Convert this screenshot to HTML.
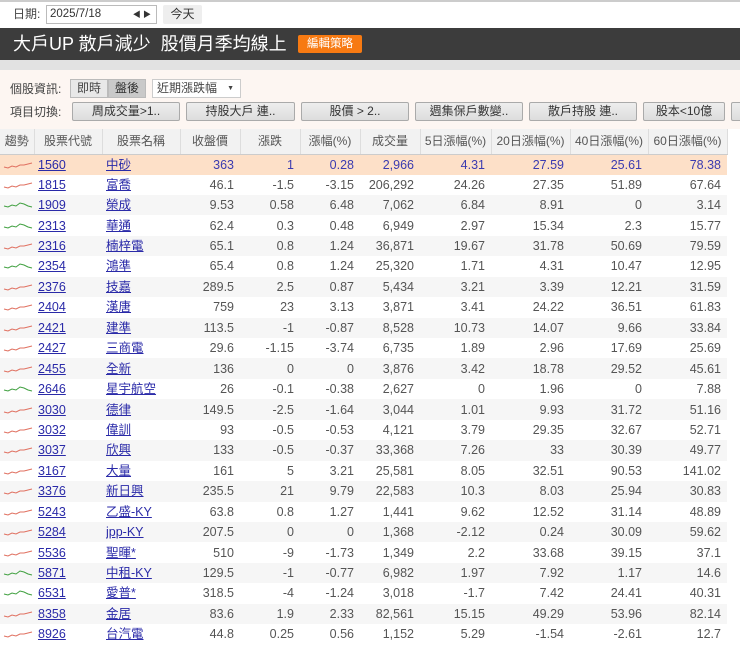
<!DOCTYPE html>
<html><head><meta charset="utf-8"><style>
*{margin:0;padding:0;box-sizing:border-box}
body{width:740px;height:646px;overflow:hidden;background:#fff;font-family:"Liberation Sans","Noto Sans CJK TC",sans-serif;font-size:12px;color:#555;position:relative;line-height:1.2}
.abs{position:absolute}
.btn{position:absolute;top:102px;height:19px;background:linear-gradient(#eee,#ddd);border:1px solid #aaa;border-radius:2px;font-size:12px;color:#333;text-align:center;line-height:17px;overflow:hidden}
table{position:absolute;left:0;top:129px;border-collapse:collapse;table-layout:fixed;width:727px}
th{height:25px;line-height:16px;background:#f2f2f2;font-weight:normal;color:#555;border-right:1px solid #ddd;border-bottom:1px solid #ccc;font-size:12px;overflow:hidden;white-space:nowrap}
tr{height:20.45px}
td{height:20.45px;line-height:20px;padding:0 6px 0 0;text-align:right;font-size:12.5px;white-space:nowrap;vertical-align:middle;overflow:hidden}
td.l{text-align:left;padding-left:4px}
td.l a{display:block;height:20px;line-height:20px;overflow:hidden}
td.s{padding:0 0 0 3px;text-align:left}
tr:nth-child(even) td{background:#f6f6f6}
tr.hl td{background:#fde0c8;color:#3b3bb0}
a{color:#2a2aa8;text-decoration:underline}
svg{display:block}
</style></head><body>
<div class="abs" style="left:0;top:0;width:740px;height:27px;background:#fff;border-top:2px solid #ccc"></div>
<div class="abs" style="left:13px;top:6px;color:#444;line-height:16px">日期:</div>
<div class="abs" style="left:46px;top:5px;width:111px;height:19px;border:1px solid #bbb;font-size:11.5px;line-height:17px;padding-left:3px;color:#333">2025/7/18<span style="position:absolute;right:5px;font-size:8px">◀ ▶</span></div>
<div class="abs" style="left:163px;top:5px;width:39px;height:19px;background:#eee;border-radius:2px;text-align:center;line-height:19px;color:#333">今天</div>
<div class="abs" style="left:0;top:28px;width:740px;height:32px;background:#3c3c3c"></div>
<div class="abs" style="left:13px;top:31px;color:#fff;font-size:18px;line-height:26px;white-space:nowrap">大戶UP 散戶減少&nbsp; 股價月季均線上</div>
<div class="abs" style="left:298px;top:35px;width:64px;height:18px;background:#f77a12;color:#fff;font-size:11.5px;text-align:center;line-height:18px;border-radius:2px">編輯策略</div>
<div class="abs" style="left:0;top:60px;width:740px;height:10px;background:#e2e2e2"></div>
<div class="abs" style="left:0;top:70px;width:740px;height:59px;background:#fdf6f2"></div>
<div class="abs" style="left:10px;top:80px;color:#444;line-height:18px">個股資訊:</div>
<div class="abs" style="left:70px;top:79px;width:38px;height:19px;background:#e8e8e8;border:1px solid #bbb;text-align:center;line-height:17px;color:#444">即時</div>
<div class="abs" style="left:108px;top:79px;width:38px;height:19px;background:#c9c9c9;border:1px solid #bbb;text-align:center;line-height:17px;color:#333">盤後</div>
<div class="abs" style="left:152px;top:79px;width:89px;height:19px;background:#fff;border:1px solid #ccc;line-height:17px;padding-left:4px;color:#444">近期漲跌幅<span style="position:absolute;right:6px;font-size:7px">▼</span></div>
<div class="abs" style="left:10px;top:103px;color:#444;line-height:18px">項目切換:</div>
<div class="btn" style="left:72px;width:108px">周成交量&gt;1..</div>
<div class="btn" style="left:186px;width:109px">持股大戶 連..</div>
<div class="btn" style="left:301px;width:108px">股價 &gt; 2..</div>
<div class="btn" style="left:415px;width:108px">週集保戶數變..</div>
<div class="btn" style="left:529px;width:108px">散戶持股 連..</div>
<div class="btn" style="left:643px;width:82px">股本&lt;10億</div>
<div class="btn" style="left:731px;width:20px"></div>
<svg width="0" height="0" style="position:absolute"><defs>
<symbol id="r" viewBox="0 0 30 10"><polyline points="1,7 5,8 9,6 13,7 17,5 21,5 25,4 29,3" fill="none" stroke="#e07060" stroke-width="1"/></symbol>
<symbol id="g" viewBox="0 0 30 10"><polyline points="1,6 5,7 9,5 13,6 17,3 21,4 25,6 29,7" fill="none" stroke="#40a040" stroke-width="1"/></symbol>
</defs></svg>
<table>
<colgroup><col style="width:34px"><col style="width:68px"><col style="width:78px"><col style="width:60px"><col style="width:60px"><col style="width:60px"><col style="width:60px"><col style="width:71px"><col style="width:79px"><col style="width:78px"><col style="width:79px"></colgroup>
<tr><th>趨勢</th><th>股票代號</th><th>股票名稱</th><th>收盤價</th><th>漲跌</th><th>漲幅(%)</th><th>成交量</th><th>5日漲幅(%)</th><th>20日漲幅(%)</th><th>40日漲幅(%)</th><th>60日漲幅(%)</th></tr>
<tr class="hl"><td class="s"><svg width="30" height="10"><use href="#r"/></svg></td><td class="l"><a>1560</a></td><td class="l"><a>中砂</a></td><td>363</td><td>1</td><td>0.28</td><td>2,966</td><td>4.31</td><td>27.59</td><td>25.61</td><td>78.38</td></tr>
<tr><td class="s"><svg width="30" height="10"><use href="#r"/></svg></td><td class="l"><a>1815</a></td><td class="l"><a>富喬</a></td><td>46.1</td><td>-1.5</td><td>-3.15</td><td>206,292</td><td>24.26</td><td>27.35</td><td>51.89</td><td>67.64</td></tr>
<tr><td class="s"><svg width="30" height="10"><use href="#g"/></svg></td><td class="l"><a>1909</a></td><td class="l"><a>榮成</a></td><td>9.53</td><td>0.58</td><td>6.48</td><td>7,062</td><td>6.84</td><td>8.91</td><td>0</td><td>3.14</td></tr>
<tr><td class="s"><svg width="30" height="10"><use href="#g"/></svg></td><td class="l"><a>2313</a></td><td class="l"><a>華通</a></td><td>62.4</td><td>0.3</td><td>0.48</td><td>6,949</td><td>2.97</td><td>15.34</td><td>2.3</td><td>15.77</td></tr>
<tr><td class="s"><svg width="30" height="10"><use href="#r"/></svg></td><td class="l"><a>2316</a></td><td class="l"><a>楠梓電</a></td><td>65.1</td><td>0.8</td><td>1.24</td><td>36,871</td><td>19.67</td><td>31.78</td><td>50.69</td><td>79.59</td></tr>
<tr><td class="s"><svg width="30" height="10"><use href="#g"/></svg></td><td class="l"><a>2354</a></td><td class="l"><a>鴻準</a></td><td>65.4</td><td>0.8</td><td>1.24</td><td>25,320</td><td>1.71</td><td>4.31</td><td>10.47</td><td>12.95</td></tr>
<tr><td class="s"><svg width="30" height="10"><use href="#r"/></svg></td><td class="l"><a>2376</a></td><td class="l"><a>技嘉</a></td><td>289.5</td><td>2.5</td><td>0.87</td><td>5,434</td><td>3.21</td><td>3.39</td><td>12.21</td><td>31.59</td></tr>
<tr><td class="s"><svg width="30" height="10"><use href="#r"/></svg></td><td class="l"><a>2404</a></td><td class="l"><a>漢唐</a></td><td>759</td><td>23</td><td>3.13</td><td>3,871</td><td>3.41</td><td>24.22</td><td>36.51</td><td>61.83</td></tr>
<tr><td class="s"><svg width="30" height="10"><use href="#r"/></svg></td><td class="l"><a>2421</a></td><td class="l"><a>建準</a></td><td>113.5</td><td>-1</td><td>-0.87</td><td>8,528</td><td>10.73</td><td>14.07</td><td>9.66</td><td>33.84</td></tr>
<tr><td class="s"><svg width="30" height="10"><use href="#r"/></svg></td><td class="l"><a>2427</a></td><td class="l"><a>三商電</a></td><td>29.6</td><td>-1.15</td><td>-3.74</td><td>6,735</td><td>1.89</td><td>2.96</td><td>17.69</td><td>25.69</td></tr>
<tr><td class="s"><svg width="30" height="10"><use href="#r"/></svg></td><td class="l"><a>2455</a></td><td class="l"><a>全新</a></td><td>136</td><td>0</td><td>0</td><td>3,876</td><td>3.42</td><td>18.78</td><td>29.52</td><td>45.61</td></tr>
<tr><td class="s"><svg width="30" height="10"><use href="#g"/></svg></td><td class="l"><a>2646</a></td><td class="l"><a>星宇航空</a></td><td>26</td><td>-0.1</td><td>-0.38</td><td>2,627</td><td>0</td><td>1.96</td><td>0</td><td>7.88</td></tr>
<tr><td class="s"><svg width="30" height="10"><use href="#r"/></svg></td><td class="l"><a>3030</a></td><td class="l"><a>德律</a></td><td>149.5</td><td>-2.5</td><td>-1.64</td><td>3,044</td><td>1.01</td><td>9.93</td><td>31.72</td><td>51.16</td></tr>
<tr><td class="s"><svg width="30" height="10"><use href="#r"/></svg></td><td class="l"><a>3032</a></td><td class="l"><a>偉訓</a></td><td>93</td><td>-0.5</td><td>-0.53</td><td>4,121</td><td>3.79</td><td>29.35</td><td>32.67</td><td>52.71</td></tr>
<tr><td class="s"><svg width="30" height="10"><use href="#r"/></svg></td><td class="l"><a>3037</a></td><td class="l"><a>欣興</a></td><td>133</td><td>-0.5</td><td>-0.37</td><td>33,368</td><td>7.26</td><td>33</td><td>30.39</td><td>49.77</td></tr>
<tr><td class="s"><svg width="30" height="10"><use href="#r"/></svg></td><td class="l"><a>3167</a></td><td class="l"><a>大量</a></td><td>161</td><td>5</td><td>3.21</td><td>25,581</td><td>8.05</td><td>32.51</td><td>90.53</td><td>141.02</td></tr>
<tr><td class="s"><svg width="30" height="10"><use href="#r"/></svg></td><td class="l"><a>3376</a></td><td class="l"><a>新日興</a></td><td>235.5</td><td>21</td><td>9.79</td><td>22,583</td><td>10.3</td><td>8.03</td><td>25.94</td><td>30.83</td></tr>
<tr><td class="s"><svg width="30" height="10"><use href="#r"/></svg></td><td class="l"><a>5243</a></td><td class="l"><a>乙盛-KY</a></td><td>63.8</td><td>0.8</td><td>1.27</td><td>1,441</td><td>9.62</td><td>12.52</td><td>31.14</td><td>48.89</td></tr>
<tr><td class="s"><svg width="30" height="10"><use href="#r"/></svg></td><td class="l"><a>5284</a></td><td class="l"><a>jpp-KY</a></td><td>207.5</td><td>0</td><td>0</td><td>1,368</td><td>-2.12</td><td>0.24</td><td>30.09</td><td>59.62</td></tr>
<tr><td class="s"><svg width="30" height="10"><use href="#r"/></svg></td><td class="l"><a>5536</a></td><td class="l"><a>聖暉*</a></td><td>510</td><td>-9</td><td>-1.73</td><td>1,349</td><td>2.2</td><td>33.68</td><td>39.15</td><td>37.1</td></tr>
<tr><td class="s"><svg width="30" height="10"><use href="#g"/></svg></td><td class="l"><a>5871</a></td><td class="l"><a>中租-KY</a></td><td>129.5</td><td>-1</td><td>-0.77</td><td>6,982</td><td>1.97</td><td>7.92</td><td>1.17</td><td>14.6</td></tr>
<tr><td class="s"><svg width="30" height="10"><use href="#g"/></svg></td><td class="l"><a>6531</a></td><td class="l"><a>愛普*</a></td><td>318.5</td><td>-4</td><td>-1.24</td><td>3,018</td><td>-1.7</td><td>7.42</td><td>24.41</td><td>40.31</td></tr>
<tr><td class="s"><svg width="30" height="10"><use href="#r"/></svg></td><td class="l"><a>8358</a></td><td class="l"><a>金居</a></td><td>83.6</td><td>1.9</td><td>2.33</td><td>82,561</td><td>15.15</td><td>49.29</td><td>53.96</td><td>82.14</td></tr>
<tr><td class="s"><svg width="30" height="10"><use href="#r"/></svg></td><td class="l"><a>8926</a></td><td class="l"><a>台汽電</a></td><td>44.8</td><td>0.25</td><td>0.56</td><td>1,152</td><td>5.29</td><td>-1.54</td><td>-2.61</td><td>12.7</td></tr>
</table>
</body></html>
